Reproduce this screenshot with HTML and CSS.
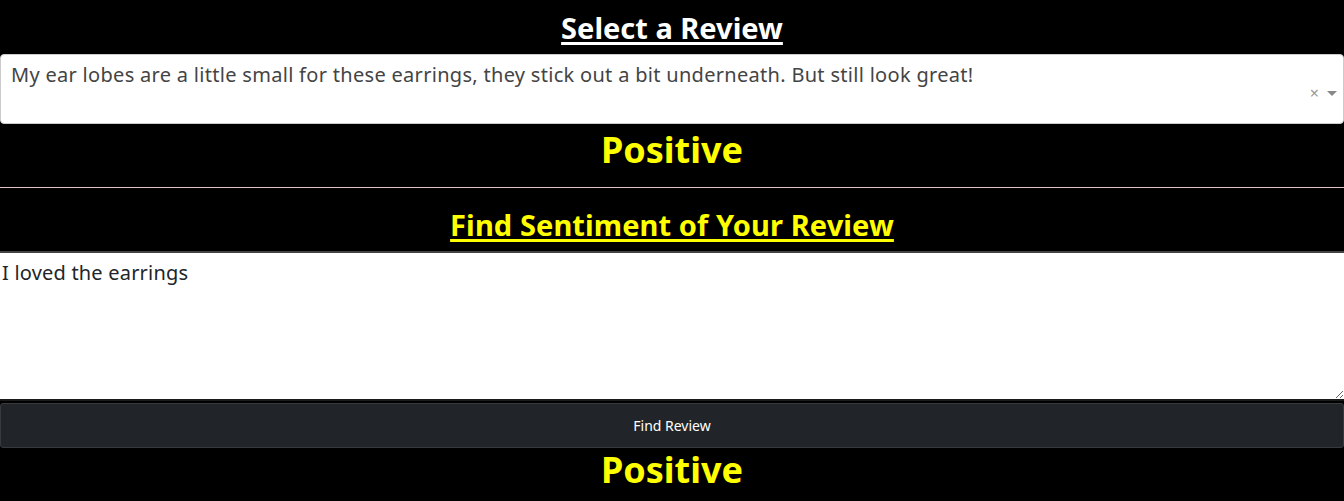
FILE: index.html
```html
<!DOCTYPE html>
<html lang="en">
<head>
<meta charset="utf-8">
<title>Review Sentiment</title>
<link rel="stylesheet" href="styles.css">
</head>
<body>
<main class="page">
  <section class="block">
    <h2 class="title title-white">Select a Review</h2>
    <div class="select">
      <span class="select-value">My ear lobes are a little small for these earrings, they stick out a bit underneath. But still look great!</span>
      <span class="select-controls"><span class="select-clear">×</span><span class="select-caret"></span></span>
    </div>
    <h1 class="result">Positive</h1>
  </section>
  <hr class="divider">
  <section class="block">
    <h2 class="title title-yellow">Find Sentiment of Your Review</h2>
    <textarea class="review-input">I loved the earrings</textarea>
    <button class="btn-find" type="button">Find Review</button>
    <h1 class="result result-last">Positive</h1>
  </section>
</main>
</body>
</html>
```

FILE: styles.css
```css
html, body {
  margin: 0;
  padding: 0;
  background: #000;
}
body {
  font-family: "Noto Sans", "Open Sans", "Liberation Sans", sans-serif;
  overflow: hidden;
}
.page {
  display: flex;
  flex-direction: column;
}
.block {
  display: flex;
  flex-direction: column;
}
.title {
  margin: 0;
  text-align: center;
  font-size: 29px;
  font-weight: 700;
  text-decoration: underline;
  text-decoration-thickness: 3px;
  text-underline-offset: 3px;
  line-height: 56px;
  height: 54px;
}
.title-white { color: #fff; }
.title-yellow {
  color: #ffff00;
  letter-spacing: 0.1px;
  line-height: 50px;
  height: 51px;
  padding-top: 12px;
}
.select {
  background: #fff;
  border: 1px solid #ccc;
  border-radius: 4px;
  height: 70px;
  box-sizing: border-box;
  position: relative;
  padding: 6px 40px 0 10px;
}
.select-value {
  font-size: 20px;
  color: #444;
  line-height: 28px;
  letter-spacing: 0.3px;
}
.select-controls {
  position: absolute;
  right: 6px;
  top: 30px;
  display: flex;
  align-items: center;
  gap: 8px;
}
.select-clear {
  color: #999;
  font-size: 16px;
  line-height: 16px;
}
.select-caret {
  width: 0;
  height: 0;
  border-left: 5px solid transparent;
  border-right: 5px solid transparent;
  border-top: 5px solid #888;
}
.result {
  margin: 0;
  text-align: center;
  color: #ffff00;
  font-size: 36px;
  font-weight: 700;
  line-height: 52px;
  height: 63px;
}
.result-last {
  line-height: 44px;
}
.divider {
  margin: 0;
  border: 0;
  border-top: 1px solid #dcc4c4;
  height: 0;
}
.review-input {
  display: block;
  width: 100%;
  box-sizing: border-box;
  height: 150px;
  margin: 0;
  border: 0;
  border-top: 2px solid #444;
  border-bottom: 2px solid #1a1a1a;
  padding: 6px 2px;
  font-family: inherit;
  font-size: 20px;
  letter-spacing: 0.2px;
  color: #212529;
  background: #fff;
  resize: vertical;
  outline: none;
}
.btn-find {
  display: block;
  width: 100%;
  height: 45px;
  margin: 2px 0 0 0;
  background: #212529;
  border: 1px solid #373b3e;
  border-radius: 3px;
  color: #fff;
  font-family: inherit;
  font-size: 14px;
}
```
